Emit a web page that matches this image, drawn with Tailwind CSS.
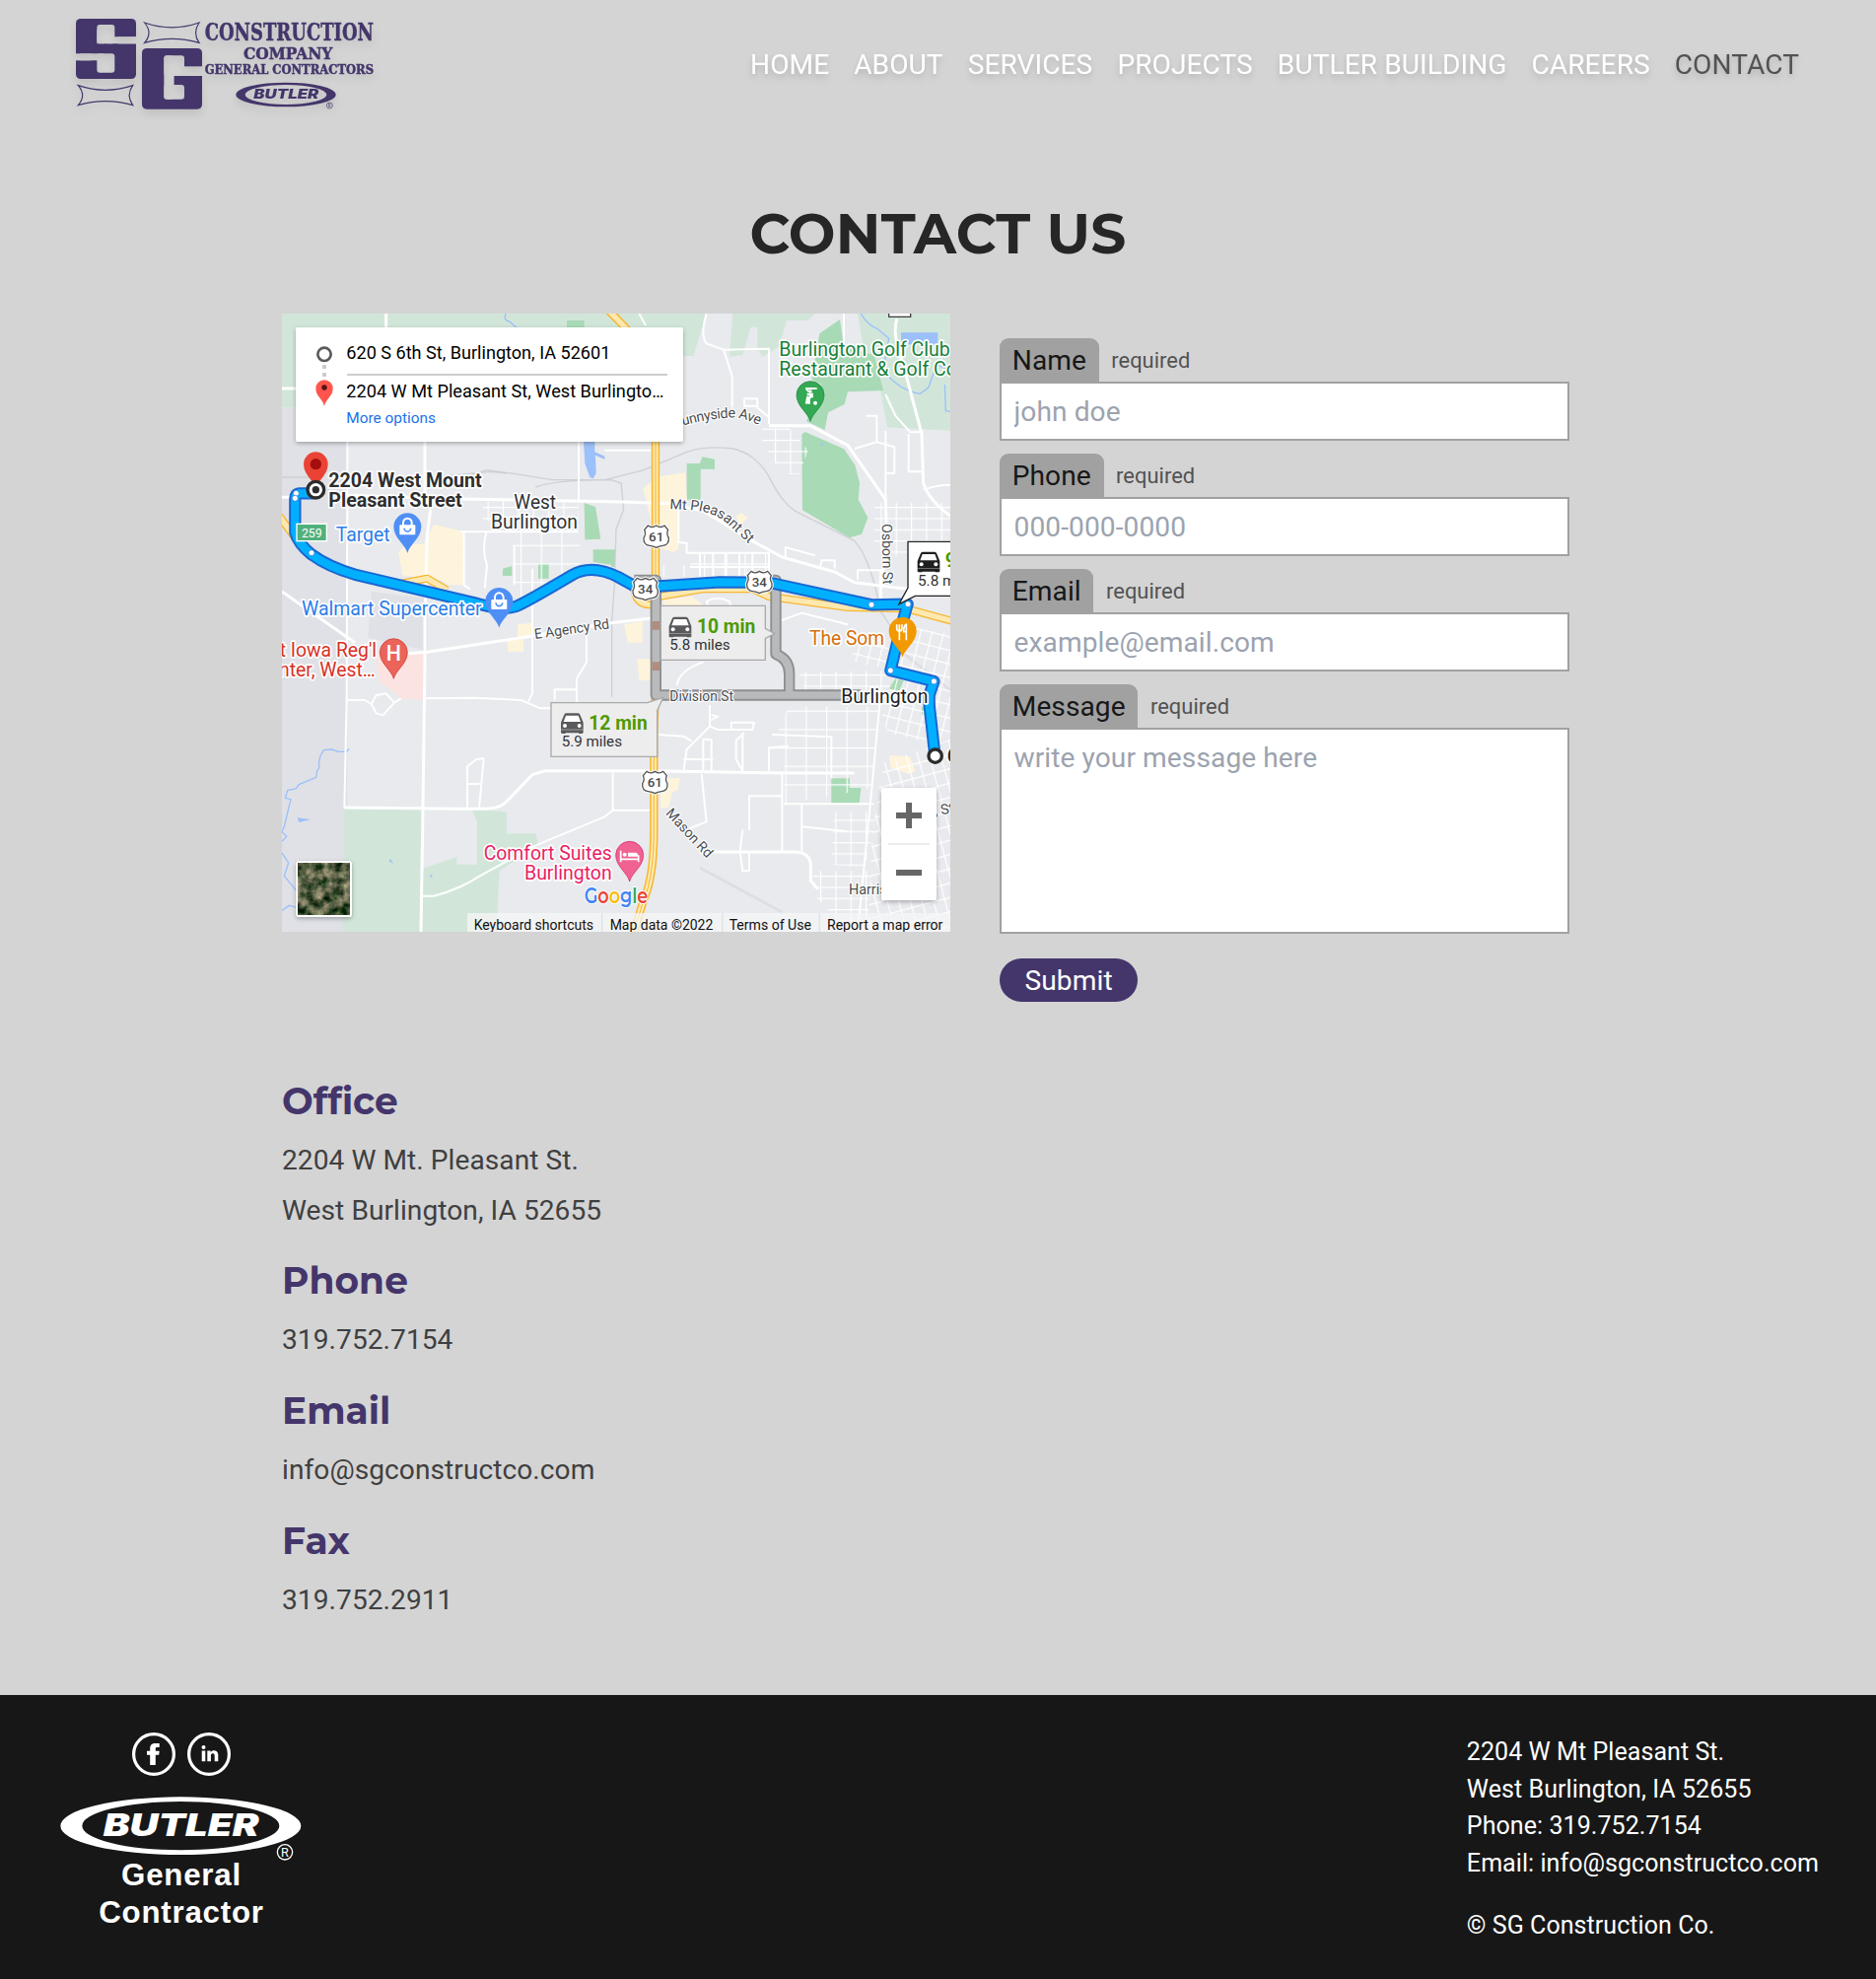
<!DOCTYPE html>
<html lang="en">
<head>
<meta charset="utf-8">
<title>Contact | SG Construction</title>
<script src="https://cdn.jsdelivr.net/npm/@tailwindcss/browser@4"></script>
</head>
<body class="bg-[#d4d4d4] font-['Roboto',sans-serif] text-[28.125px] leading-[43.75px] tracking-[0.002em] text-neutral-700">

<header class="flex h-[130px] items-center justify-between pl-[76px] pr-[78px]">
  <svg class="h-[96px] w-[306px] overflow-visible [filter:drop-shadow(0_5px_4px_rgb(0_0_0/0.09))]" viewBox="48 51 918 288" fill="#44366b">
    <mask id="ms" maskUnits="userSpaceOnUse" x="40" y="40" width="420" height="310">
      <rect x="40" y="40" width="420" height="310" fill="#fff"/>
      <g fill="#000">
        <rect x="115" y="75" width="54" height="58" rx="9"/><rect x="115" y="90" width="24" height="43" rx="2"/><rect x="141" y="112" width="110" height="21" rx="8"/><rect x="180" y="112" width="60" height="21"/>
        <rect x="115" y="163" width="54" height="58" rx="9"/><rect x="60" y="163" width="80" height="21" rx="8"/><rect x="48" y="163" width="50" height="21"/>
        <rect x="319" y="169" width="30" height="133" rx="9"/><rect x="319" y="169" width="62" height="62" rx="9"/><rect x="319" y="258" width="62" height="44" rx="9"/><rect x="330" y="190" width="19" height="90"/><rect x="360" y="202" width="90" height="29"/>
      </g>
    </mask>
    <g mask="url(#ms)">
      <rect x="51" y="57" width="183" height="183" rx="14"/>
      <rect x="252" y="147" width="183" height="185" rx="14"/>
    </g>
    <g fill="none" stroke="#44366b" stroke-width="3.5">
      <path d="M260 69Q343 98 426 69Q405 100 426 130Q343 106 260 130Q286 100 260 69Z"/>
      <path d="M58 260Q141 288 224 260Q203 290 224 320Q141 296 58 320Q84 290 58 260Z"/>
    </g>
    <g font-family="DejaVu Serif" font-weight="bold" letter-spacing="0" stroke="#44366b" stroke-width="1.5">
      <text x="443" y="124" font-size="73" textLength="514" lengthAdjust="spacingAndGlyphs">CONSTRUCTION</text>
      <text x="561" y="180" font-size="48" textLength="271" lengthAdjust="spacingAndGlyphs">COMPANY</text>
      <text x="443" y="224" font-size="37" textLength="514" lengthAdjust="spacingAndGlyphs">GENERAL CONTRACTORS</text>
    </g>
    <path fill-rule="evenodd" d="M538 288a152 37 0 1 0 304 0a152 37 0 1 0 -304 0ZM566 288a124 30 0 1 0 248 0a124 30 0 1 0 -248 0Z"/>
    <text x="592" y="301" font-family="Inter" font-weight="900" font-style="italic" font-size="38" letter-spacing="0" textLength="198" lengthAdjust="spacingAndGlyphs">BUTLER</text>
    <circle cx="823" cy="321" r="9" fill="none" stroke="#44366b" stroke-width="2"/>
    <text x="818" y="326" font-family="Roboto" font-size="14" letter-spacing="0">R</text>
  </svg>
  <nav class="flex gap-[25px] pt-[2px] text-white [filter:drop-shadow(0_5px_3.75px_rgb(0_0_0/0.1))_drop-shadow(0_2.5px_2.5px_rgb(0_0_0/0.08))]">
    <a>HOME</a><a>ABOUT</a><a>SERVICES</a><a>PROJECTS</a><a>BUTLER BUILDING</a><a>CAREERS</a><a class="text-neutral-600">CONTACT</a>
  </nav>
</header>

<main class="h-[1589px]">
  <h1 class="pt-[74px] text-center font-['Montserrat','Inter',sans-serif] text-[56.5px] leading-[65px] font-bold tracking-[0.004em] text-neutral-800">CONTACT US</h1>
  <div class="mx-auto mt-[49px] flex w-[1331px] items-start gap-[25px]">
    <svg class="h-[627px] w-[678px] shrink-0" viewBox="18 24 2034 1881" font-family="Roboto" letter-spacing="0">
      <defs>
        <path id="pin" d="M0 0C-6 -26 -42 -46 -42 -80A42 42 0 1 1 42 -80C42 -46 6 -26 0 0Z"/>
        <pattern id="grid" width="46" height="34" patternUnits="userSpaceOnUse"><path d="M0 0H46M0 0V34" stroke="#fff" stroke-width="7"/></pattern>
        <pattern id="wide" width="62" height="56" patternUnits="userSpaceOnUse"><path d="M0 0H62M0 0V56" stroke="#fff" stroke-width="7"/></pattern>
        <pattern id="tilt" width="34" height="42" patternUnits="userSpaceOnUse" patternTransform="rotate(-15)"><path d="M0 0H34M0 0V42" stroke="#fff" stroke-width="7"/></pattern>
        <pattern id="tilt2" width="34" height="40" patternUnits="userSpaceOnUse" patternTransform="rotate(14)"><path d="M0 0H34M0 0V40" stroke="#fff" stroke-width="7"/></pattern>
        <filter id="soft" x="-10%" y="-10%" width="120%" height="130%"><feDropShadow dx="0" dy="5" stdDeviation="6" flood-opacity=".3"/></filter>
        <filter id="sat" x="0" y="0" width="100%" height="100%" color-interpolation-filters="sRGB"><feTurbulence type="fractalNoise" baseFrequency=".035" numOctaves="4" seed="8"/><feColorMatrix values="1.2 0 0 0 -.28  .9 .1 0 0 -.14  .9 0 0 0 -.2  0 0 0 0 1"/></filter>
        <g id="shield"><path d="M-25 -33Q-14 -24 0 -33Q14 -24 25 -33L36 -20Q30 -8 38 4Q40 26 20 28Q8 29 0 34Q-8 29 -20 28Q-40 26 -38 4Q-30 -8 -36 -20Z" fill="#fff" stroke="#fff" stroke-width="10"/><path d="M-25 -33Q-14 -24 0 -33Q14 -24 25 -33L36 -20Q30 -8 38 4Q40 26 20 28Q8 29 0 34Q-8 29 -20 28Q-40 26 -38 4Q-30 -8 -36 -20Z" fill="#fff" stroke="#555" stroke-width="4"/></g>
        <g id="car"><path d="M-24 -28Q-22 -32 -17 -32H17Q22 -32 24 -28L34 -4V28H-34V-4Z"/><path d="M-32 20H-20V30H-32ZM20 20H32V30H20Z"/><path d="M-19 -25H19L26 -6H-26Z" fill="#fff"/><circle cx="-22" cy="6" r="6" fill="#fff"/><circle cx="22" cy="6" r="6" fill="#fff"/><path d="M-34 18H34" stroke="#fff" stroke-width="2" opacity=".6"/></g>
        <g id="bag"><rect x="-24" y="-80" width="48" height="30" rx="3" fill="#fff"/><path d="M-13 -78V-86A13 14 0 0 1 13 -86V-78" fill="none" stroke="#fff" stroke-width="6"/><path d="M-10 -70A10 10 0 0 0 10 -70" fill="none" stroke="#4f8ff5" stroke-width="5"/></g>
      </defs>
      <rect x="18" y="24" width="2034" height="1881" fill="#e8eaed"/>
      <path d="M18 310H217V1530L205 1905H18ZM290 870L460 890V1050L280 1010Z" fill="#e0e1e6"/>
      <!-- parks and open land -->
      <g fill="#d1e6d9">
        <path d="M18 24H1310L1270 153H60V310H18ZM1390 24H1640L1620 45H1555L1530 125L1480 155L1465 130V65H1445L1420 150L1380 155ZM1770 24H2052V380L1860 370L1840 260L1790 140Z"/>
        <path d="M208 1530H447V1712L550 1678V1700H612V1570L596 1532L702 1540V1606H790L798 1640L680 1720L670 1905H202Z"/>
      </g>
      <g fill="#a8dab5">
        <path d="M1654 85L1716 42L1728 125L1820 150L1848 258L1740 262L1730 300L1680 325L1670 378L1614 352L1660 240L1630 225Z"/>
        <path d="M1600 392L1610 384L1728 436L1762 485L1776 540L1772 590L1801 645L1782 695L1745 706L1602 622Z"/>
        <path d="M1250 480H1290L1297 460L1335 467V497H1292V590H1250ZM938 600L972 612L988 710L940 712ZM965 742H1030V790L965 780ZM798 786H830V830H798ZM690 800L718 792V822H690ZM885 45H938V66H885ZM1020 742H1032V795H1020ZM1690 1438H1746V1467H1780L1775 1514H1690ZM1885 1135L1910 1140L1895 1175L1865 1165ZM1965 1220H1985V1245H1965Z"/>
      </g>
      <g fill="#fef4dc">
        <path d="M480 665L572 688V850H525L500 835L385 820L372 750L400 725H450ZM1117 555L1165 520L1245 508L1250 590L1225 600V740L1210 750L1160 735ZM1400 640L1415 630L1437 645L1410 670ZM1060 970L1115 960V1025H1070ZM1100 1075H1140V1140H1105ZM735 970L780 965V1005H753V1052H705V1010H735ZM1195 1437H1230L1222 1475L1205 1480L1197 1525L1170 1530V1480ZM1867 1368L1930 1372L1945 1415L1925 1425L1870 1405ZM1180 895L1265 885L1305 915H1180Z"/>
      </g>
      <path d="M300 1055L452 1060V1200L400 1195L385 1200L360 1175L315 1145Z" fill="#fbe3e2"/>
      <g fill="#9cc0f9"><path d="M936 413H970V445L1000 458V468L972 455L974 510L965 526L955 522L940 480ZM1902 82H2014V118H1902ZM65 1558L105 1563L70 1572ZM343 1690L348 1684L358 1698ZM466 1730L475 1733V1743ZM1655 420H1668L1660 427Z"/></g>
      <g fill="none" stroke="#9cc0f9" stroke-width="4"><path d="M700 24Q690 45 710 48L735 70M1780 24Q1800 60 1830 70L1865 100L1855 150L1850 200Q1900 260 1960 268L1985 250L2010 180L2052 195M2035 240L2038 320L2052 322"/><path d="M222 1348L215 1357H190L170 1350L145 1352L135 1370L130 1390L132 1405L125 1415L122 1435L70 1457L60 1470L35 1475L28 1498L45 1502L38 1530L25 1585L18 1600L32 1615L18 1630M18 1665L38 1695L25 1735L62 1780M18 1840L40 1825L65 1832"/></g>
      <!-- rail lines -->
      <g fill="none" stroke="#cfd0d4" stroke-width="4"><path d="M18 522H100M480 522L650 505L700 510M560 530L640 500L730 512L840 530L1000 530L1120 500L1250 445Q1310 425 1390 435Q1460 450 1500 520Q1540 600 1580 625L1760 715Q1810 770 1840 930L1870 975M790 552Q850 530 1020 530L1050 540L1058 620L1035 680L1030 850L1022 960V1190"/><path d="M1290 1710L1540 1845M1900 1050L2052 1170" stroke="#dddee2" stroke-width="8"/></g>
      <!-- city blocks -->
      <path fill="url(#wide)" d="M1560 1220H1840L1810 1470L1545 1516V1400L1500 1360ZM720 690H925V830H840L720 900ZM1260 755H1500V825H1170V790H1260Z"/>
      <path fill="url(#grid)" d="M1635 1720H1810L1800 1905H1680V1840L1635 1790ZM1700 1540H1830L1790 1710L1690 1700ZM630 595H920V655H630ZM1820 600H2052V760H1880L1820 740ZM1480 370L1560 372L1620 440L1592 512H1560L1520 480L1480 420ZM1590 1115L1870 1110V1170H1610Z"/>
      <path fill="url(#tilt)" d="M1850 1390L2052 1320V1905H1800L1815 1600Z"/>
      <path fill="url(#tilt2)" d="M1925 975L2052 1000V1310L1990 1330L1860 1300L1840 1230L1890 1110L1740 1080L1780 1020L1900 1010Z"/>
      <g fill="none" stroke="#fff" stroke-width="6" stroke-linejoin="round">
        <path d="M217 413V560L215 1200L208 1526M921 413V600M560 688H920M640 690Q625 740 642 790L635 860M572 690V850L590 862M780 800V1180L768 1205M725 730V850M780 960V1180M945 1000V1085L915 1135V1215M848 1200V1168H915M215 1200H270L290 1212L305 1185L335 1180L360 1208L380 1195M290 1212L305 1240L325 1246L360 1208M453 1195L600 1193L745 1200L805 1225H840M582 1530V1402L610 1380L632 1378L618 1530M580 1455H620M447 1796H480Q560 1775 620 1735L790 1642L1000 1555L1025 1535H1150M1025 1420V1535"/>
        <path d="M1105 24L1125 60M1310 24Q1290 90 1310 115L1362 134L1500 131V360M1362 134L1388 215V310M1000 440H1140M1425 283H1465V310L1500 340M1425 283V305H1465M1728 24V120M1795 335H1828V415L1882 430V510H1855V590M1828 415L1760 435M1855 380V590M1855 270L1885 335L1930 385H1970M1925 390V505H1965M1970 560Q2010 545 2052 545M1225 600V720L1250 722V752H1500V830M1550 765V735L1640 760M1500 795H1260M1290 755V825M1330 755V825M1370 755V825M1410 755V825M1450 755V825M1655 800L1660 775H1700V800M1770 835V805H1840V860M1330 960L1310 900Q1340 880 1380 900L1400 960M1530 960L1600 935L1740 970"/>
        <path d="M1220 1155Q1225 1110 1300 1084M1320 1215V1280L1250 1350L1240 1415M1165 1305L1240 1310L1265 1325M1320 1280L1345 1290H1450L1455 1268H1385V1290M1325 1245L1345 1250L1320 1262M1300 1415V1320H1325V1415M1240 1380H1330M1425 1300L1400 1322V1380L1420 1415V1300M1500 1415V1345L1560 1340M1540 1425V1660M1440 1595V1492H1540M1295 1425L1310 1570L1260 1590M1600 1516V1660M1420 1595L1412 1660L1420 1720H1440V1665M1600 1585L1740 1600M1545 1516H1820M1510 1305L1690 1312V1438M1840 1180L1810 1500L1770 1905"/>
      </g>
      <g fill="none" stroke="#fff" stroke-width="9" stroke-linejoin="round">
        <path d="M335 24V66M18 252H62M18 583H60M160 575L560 588L1060 597L1200 602L1300 625Q1380 670 1420 700L1540 765L1700 810L1760 842L1920 862M453 413V590M470 620L460 700L453 960V1080L447 1530L441 1905M18 870L240 1025M400 1058L460 1054L780 1005L1020 965L1150 950M208 1527L560 1531H630Q680 1530 700 1510L780 1427L820 1415H1130L1560 1422H1760"/>
        <path d="M1890 40Q1875 80 1900 150L1925 240L1965 390L1970 540Q1985 590 2052 640M1500 365H1626L1740 425L1855 590L1860 760L1840 830V930M1310 1662H1580Q1625 1665 1627 1700V1750L1650 1775"/>
      </g>
      <!-- highways -->
      <g fill="none" stroke-linejoin="round">
        <path d="M1010 12L1090 95M1155 400V1160L1150 1300V1600Q1150 1740 1118 1810L1085 1920" stroke="#f8b630" stroke-width="25"/>
        <path d="M1010 12L1090 95M1155 400V1160L1150 1300V1600Q1150 1740 1118 1810L1085 1920" stroke="#fde9b0" stroke-width="16"/>
        <path d="M10 640L60 710M380 845L460 830L520 865M1090 850Q1090 910 1140 910M1165 885L1250 870L1300 862H1450L1500 885L1740 918L1920 922L2060 960" stroke="#f8b630" stroke-width="24"/>
        <path d="M10 640L60 710M380 845L460 830L520 865M1090 850Q1090 910 1140 910M1165 885L1250 870L1300 862H1450L1500 885L1740 918L1920 922L2060 960" stroke="#fde9b0" stroke-width="16"/>
        <path d="M1155 400V830M1150 1365V1600Q1150 1740 1118 1810L1085 1920" stroke="#f8b630" stroke-width="3"/>
      </g>
      <!-- alternative routes -->
      <g fill="none" stroke-linejoin="round">
        <path d="M1090 835H1156V1185H1780M1505 835H1521V1060Q1562 1075 1562 1120V1185" stroke="#8d8e90" stroke-width="34"/>
        <path d="M1090 835H1156V1185H1780M1505 835H1521V1060Q1562 1075 1562 1120V1185" stroke="#b9babb" stroke-width="23"/>
        <path d="M1156 960V986M1156 1084V1110" stroke="#b08d7e" stroke-width="22"/>
      </g>
      <!-- main route -->
      <g fill="none" stroke-linejoin="round" stroke-linecap="round">
        <path d="M112 571H72Q58 571 58 588V690Q68 725 108 757Q160 795 240 818L600 903Q690 930 730 915Q760 903 900 820Q960 785 1040 825L1100 858L1350 841L1500 842L1812 910L1922 908L1900 985L1870 1110L2002 1143L1988 1185V1215L2005 1368" stroke="#1967d2" stroke-width="37"/>
        <path d="M112 571H72Q58 571 58 588V690Q68 725 108 757Q160 795 240 818L600 903Q690 930 730 915Q760 903 900 820Q960 785 1040 825L1100 858L1350 841L1500 842L1812 910L1922 908L1900 985L1870 1110L2002 1143L1988 1185V1215L2005 1368" stroke="#00b0ff" stroke-width="25"/>
      </g>
      <g fill="#fff" stroke="#1967d2" stroke-width="2"><circle cx="61" cy="571" r="9"/><circle cx="58" cy="586" r="9"/><circle cx="108" cy="752" r="9"/><circle cx="1812" cy="910" r="9"/><circle cx="1923" cy="908" r="9"/><circle cx="1870" cy="1110" r="9"/><circle cx="2002" cy="1143" r="9"/></g>
      <circle cx="2006" cy="1370" r="20" stroke="#2b2b2b" stroke-width="10" fill="#fff"/>
      <!-- shields -->
      <rect x="1865" y="20" width="66" height="14" fill="#fff" stroke="#444" stroke-width="4"/>
      <use href="#shield" x="1157" y="702"/><use href="#shield" x="1124" y="862"/><use href="#shield" x="1471" y="841"/><use href="#shield" x="1153" y="1450"/>
      <g font-size="40" font-weight="500" fill="#4a4a4a" text-anchor="middle"><text x="1157" y="717">61</text><text x="1124" y="877">34</text><text x="1471" y="856">34</text><text x="1153" y="1465">61</text></g>
      <rect x="63" y="664" width="91" height="52" fill="#52b07c" stroke="#fff" stroke-width="4"/>
      <text x="78" y="704" font-size="37" fill="#fff" textLength="62">259</text>
      <!-- pins -->
      <path d="M121 556C114 530 84 515 84 482A37 37 0 1 1 158 482C158 515 128 530 121 556Z" fill="#ea4335"/><circle cx="121" cy="482" r="17" fill="#a50e0e"/>
      <circle cx="121" cy="560" r="25" fill="#fff" stroke="#2b2b2b" stroke-width="10"/><circle cx="121" cy="560" r="11" fill="#2b2b2b"/>
      <use href="#pin" x="400" y="753" fill="#4f8ff5"/><use href="#bag" x="400" y="747"/>
      <use href="#pin" x="679" y="980" fill="#4f8ff5"/><use href="#bag" x="679" y="974"/>
      <use href="#pin" x="1626" y="352" fill="#34a853" stroke="#188038" stroke-width="2"/>
      <g stroke="#fff" stroke-width="6" fill="none"><path d="M1611 252H1646M1613 252L1622 262"/><path d="M1616 270L1630 270L1622 284V299M1618 276L1614 299M1630 270L1632 280" stroke-width="7"/></g><circle cx="1626" cy="261" r="5" fill="#fff"/><circle cx="1641" cy="296" r="6" fill="#fff"/>
      <use href="#pin" x="358" y="1135" fill="#ea6459" stroke="#c5352c" stroke-width="2"/>
      <text x="358" y="1081" font-size="64" font-weight="500" fill="#fff" text-anchor="middle">H</text>
      <use href="#pin" x="1907" y="1070" fill="#f29900"/>
      <path d="M1889 970V982Q1889 990 1897 990Q1905 990 1905 982V970M1897 970V1018M1918 1018V970Q1910 972 1910 992H1918" fill="none" stroke="#fff" stroke-width="5"/>
      <use href="#pin" x="1076" y="1752" fill="#f06292" stroke="#d81b60" stroke-width="2"/>
      <path d="M1049 1658V1693M1103 1693V1672M1049 1684H1103" stroke="#fff" stroke-width="5"/><path d="M1071 1664H1094Q1102 1664 1102 1676H1071Z" fill="#fff"/><circle cx="1061" cy="1670" r="6" fill="#fff"/>
      <!-- place names -->
      <g stroke="#fff" stroke-width="10" stroke-linejoin="round" paint-order="stroke">
        <g font-weight="bold" fill="#2e2e2e" font-size="58"><text x="160" y="552" textLength="466" lengthAdjust="spacingAndGlyphs">2204 West Mount</text><text x="160" y="611" textLength="406" lengthAdjust="spacingAndGlyphs">Pleasant Street</text><text x="2042" y="1390">6</text></g>
        <g fill="#2b7de9" font-size="59"><text x="182" y="716" textLength="165" lengthAdjust="spacingAndGlyphs">Target</text><text x="78" y="942" textLength="548" lengthAdjust="spacingAndGlyphs">Walmart Supercenter</text></g>
        <g fill="#303134" font-size="58"><text x="724" y="617" textLength="128" lengthAdjust="spacingAndGlyphs">West</text><text x="654" y="677" textLength="264" lengthAdjust="spacingAndGlyphs">Burlington</text></g>
        <text x="1720" y="1209" fill="#202124" font-size="58" textLength="264" lengthAdjust="spacingAndGlyphs">Burlington</text>
        <g fill="#188038" font-size="58"><text x="1531" y="154" textLength="520" lengthAdjust="spacingAndGlyphs">Burlington Golf Club</text><text x="1531" y="213" textLength="655" lengthAdjust="spacingAndGlyphs">Restaurant &amp; Golf Course</text></g>
        <g fill="#d93025" font-size="58"><text x="306" y="1069" text-anchor="end">t Iowa Reg'l</text><text x="302" y="1128" text-anchor="end">nter, West…</text></g>
        <text x="1623" y="1032" fill="#d56e0c" font-size="58" textLength="228" lengthAdjust="spacingAndGlyphs">The Som</text>
        <g fill="#e91e63" font-size="59"><text x="632" y="1686" textLength="390" lengthAdjust="spacingAndGlyphs">Comfort Suites</text><text x="756" y="1745" textLength="266" lengthAdjust="spacingAndGlyphs">Burlington</text></g>
        <g fill="#4a4d51" font-size="43" stroke-width="7">
          <path id="p1" d="M1215 371Q1330 338 1400 341Q1440 347 1480 368" fill="none" stroke="none"/><text><textPath href="#p1" textLength="262">Sunnyside Ave</textPath></text>
          <path id="p2" d="M1198 618L1270 622Q1340 630 1375 665L1450 735" fill="none" stroke="none"/><text><textPath href="#p2" textLength="275">Mt Pleasant St</textPath></text>
          <text transform="translate(1844 664) rotate(89)" textLength="184" lengthAdjust="spacingAndGlyphs">Osborn St</text>
          <text transform="translate(788 1014) rotate(-8)" textLength="230" lengthAdjust="spacingAndGlyphs">E Agency Rd</text>
          <text x="1198" y="1202" font-size="42" textLength="194" lengthAdjust="spacingAndGlyphs">Division St</text>
          <text transform="translate(1184 1546) rotate(47)" textLength="186" lengthAdjust="spacingAndGlyphs">Mason Rd</text>
          <text x="1743" y="1792">Harris</text>
          <text transform="translate(2006 1552) rotate(-10)">, St</text>
        </g>
      </g>
      <!-- travel time callouts -->
      <g fill="#ededee" stroke="#aaa" stroke-width="4"><path d="M1171 913H1489V982L1517 998L1489 1012V1078H1171Z"/><path d="M837 1208H1130L1178 1192L1160 1232V1372H837Z"/></g>
      <path d="M2060 718H1923V858L1896 908L1945 883H2060" fill="#fff" stroke="#222" stroke-width="4"/>
      <g fill="#5a5a5c"><use href="#car" x="1230" y="979"/><use href="#car" x="901" y="1272"/></g><use href="#car" x="1986" y="781" fill="#1f1f1f"/>
      <g fill="#4f9a00" font-weight="bold" font-size="58"><text x="1281" y="997" textLength="178" lengthAdjust="spacingAndGlyphs">10 min</text><text x="952" y="1289" textLength="178" lengthAdjust="spacingAndGlyphs">12 min</text><text x="2036" y="796">9 min</text></g>
      <g fill="#333" font-size="46"><text x="1198" y="1047" textLength="184" lengthAdjust="spacingAndGlyphs">5.8 miles</text><text x="869" y="1340" textLength="184" lengthAdjust="spacingAndGlyphs">5.9 miles</text><text x="1953" y="851">5.8 miles</text></g>
      <!-- directions card -->
      <rect x="60" y="66" width="1179" height="348" rx="7" fill="#fff" filter="url(#soft)"/>
      <circle cx="147" cy="148" r="20" fill="none" stroke="#5a5a5a" stroke-width="8"/><path d="M141 180h12v12h-12ZM141 204h12v12h-12Z" fill="#ccc"/>
      <path d="M147 306C143 284 121 276 121 252A26 26 0 1 1 173 252C173 276 151 284 147 306Z" fill="#ff554c"/><circle cx="147" cy="249" r="8" fill="#4d1513"/>
      <path d="M216 210H1191" stroke="#ccc" stroke-width="6"/>
      <g font-size="54" fill="#000"><text x="214" y="162" textLength="804" lengthAdjust="spacingAndGlyphs">620 S 6th St, Burlington, IA 52601</text><text x="214" y="279" textLength="966" lengthAdjust="spacingAndGlyphs">2204 W Mt Pleasant St, West Burlingto…</text></g>
      <text x="214" y="357" font-size="45" fill="#1a73e8" textLength="272" lengthAdjust="spacingAndGlyphs">More options</text>
      <!-- satellite toggle -->
      <rect x="61" y="1690" width="170" height="170" rx="8" fill="#fff" filter="url(#soft)"/><rect x="67" y="1696" width="158" height="158" rx="4" fill="#3d4c3a" filter="url(#sat)"/>
      <!-- zoom control -->
      <rect x="1842" y="1467" width="168" height="342" rx="6" fill="#fff" filter="url(#soft)"/>
      <path d="M1887 1551H1965M1926 1512V1590M1887 1725H1965" stroke="#666" stroke-width="18"/><path d="M1863 1638H1989" stroke="#e6e6e6" stroke-width="5"/>
      <!-- attribution -->
      <rect x="582" y="1848" width="1470" height="60" fill="#f5f5f5" opacity=".75"/><path d="M992 1848V1905M1358 1848V1905M1654 1848V1905" stroke="#dfe3e2" stroke-width="4"/>
      <g font-size="43" fill="#111"><text x="602" y="1898" textLength="364" lengthAdjust="spacingAndGlyphs">Keyboard shortcuts</text><text x="1016" y="1898" textLength="314" lengthAdjust="spacingAndGlyphs">Map data ©2022</text><text x="1379" y="1898" textLength="250" lengthAdjust="spacingAndGlyphs">Terms of Use</text><text x="1677" y="1898" textLength="352" lengthAdjust="spacingAndGlyphs">Report a map error</text></g>
      <text x="938" y="1817" font-family="Montserrat, Inter" font-size="64" font-weight="600" stroke="#fff" stroke-width="6" paint-order="stroke" textLength="194" lengthAdjust="spacingAndGlyphs"><tspan fill="#4285f4">G</tspan><tspan fill="#ea4335">o</tspan><tspan fill="#fbbc04">o</tspan><tspan fill="#4285f4">g</tspan><tspan fill="#34a853">l</tspan><tspan fill="#ea4335">e</tspan></text>
    </svg>

    <form class="flex flex-1 flex-col gap-[13px] p-[25px]">
      <div>
        <div class="flex h-[44px] items-start"><label class="h-[44px] rounded-t-[9px] bg-neutral-400 px-[12.8px] leading-[45.5px] text-neutral-900">Name</label><span class="px-[12.5px] text-[21.875px] leading-[46px] text-neutral-600">required</span></div>
        <input class="block h-[60px] w-full border-2 border-neutral-400 bg-white px-[12.5px] tracking-[0.003em] placeholder:text-[#9ca3af]" placeholder="john doe">
      </div>
      <div>
        <div class="flex h-[44px] items-start"><label class="h-[44px] rounded-t-[9px] bg-neutral-400 px-[12.8px] leading-[45.5px] text-neutral-900">Phone</label><span class="px-[12.5px] text-[21.875px] leading-[46px] text-neutral-600">required</span></div>
        <input class="block h-[60px] w-full border-2 border-neutral-400 bg-white px-[12.5px] tracking-[0.003em] placeholder:text-[#9ca3af]" placeholder="000-000-0000">
      </div>
      <div>
        <div class="flex h-[44px] items-start"><label class="h-[44px] rounded-t-[9px] bg-neutral-400 px-[12.8px] leading-[45.5px] text-neutral-900">Email</label><span class="px-[12.5px] text-[21.875px] leading-[46px] text-neutral-600">required</span></div>
        <input class="block h-[60px] w-full border-2 border-neutral-400 bg-white px-[12.5px] tracking-[0.003em] placeholder:text-[#9ca3af]" placeholder="example@email.com">
      </div>
      <div>
        <div class="flex h-[44px] items-start"><label class="h-[44px] rounded-t-[9px] bg-neutral-400 px-[12.8px] leading-[45.5px] text-neutral-900">Message</label><span class="px-[12.5px] text-[21.875px] leading-[46px] text-neutral-600">required</span></div>
        <textarea class="block h-[209px] w-full resize-none border-2 border-neutral-400 bg-white px-[12.5px] py-[7px] tracking-[0.003em] placeholder:text-[#9ca3af]" placeholder="write your message here"></textarea>
      </div>
      <button class="mt-[12px] h-[44px] self-start rounded-full bg-[#44366b] px-[25.5px] pt-px tracking-[0.003em] text-white">Submit</button>
    </form>
  </div>

  <div class="mx-auto mt-[51px] flex w-[1331px] flex-col gap-[21.5px] leading-[50.5px]">
    <section class="mb-[-1px]"><h2 class="mb-[10px] font-['Montserrat','Inter',sans-serif] text-[37.5px] leading-[50px] font-bold tracking-normal text-[#44366b]">Office</h2><p>2204 W Mt. Pleasant St.</p><p>West Burlington, IA 52655</p></section>
    <section><h2 class="mb-[10px] font-['Montserrat','Inter',sans-serif] text-[37.5px] leading-[50px] font-bold tracking-normal text-[#44366b]">Phone</h2><p>319.752.7154</p></section>
    <section><h2 class="mb-[10px] font-['Montserrat','Inter',sans-serif] text-[37.5px] leading-[50px] font-bold tracking-normal text-[#44366b]">Email</h2><p>info@sgconstructco.com</p></section>
    <section><h2 class="mb-[10px] font-['Montserrat','Inter',sans-serif] text-[37.5px] leading-[50px] font-bold tracking-normal text-[#44366b]">Fax</h2><p>319.752.2911</p></section>
  </div>
</main>

<footer class="flex h-[288px] justify-between bg-neutral-900 pr-[58px] pl-[61px] text-[25px] leading-[37.5px] text-white">
  <div class="flex w-[245px] flex-col items-center pt-[38px]">
    <div class="flex gap-[12px]">
      <svg class="size-[44px]" viewBox="0 0 44 44"><circle cx="22" cy="22" r="20.4" fill="none" stroke="#fff" stroke-width="3.2"/><path d="M18.2 33V22.7H15V18.7H18.2V16.2C18.2 12.5 20.2 11 23.5 11H27.7V15H25.4C24.2 15 23.8 15.5 23.8 16.5V18.7H27.7L27.2 22.7H23.8V33Z" fill="#fff"/></svg>
      <svg class="size-[44px]" viewBox="0 0 44 44" fill="#fff"><circle cx="22" cy="22" r="20.4" fill="none" stroke="#fff" stroke-width="3.2"/><circle cx="16.5" cy="15" r="2"/><path d="M14.7 18.5H18.3V29.3H14.7ZM20.3 18.5H23.6V20C25.5 17.2 31.3 17.7 31.3 22.8V29.3H27.7V23.5C27.7 20.5 23.9 20.7 23.9 23.5V29.3H20.3Z"/></svg>
    </div>
    <svg class="mt-[20px] h-[66px] w-[245px] shrink-0" viewBox="64 333 735 198" fill="#fff">
      <path fill-rule="evenodd" d="M65 425a366 88 0 1 0 732 0a366 88 0 1 0 -732 0ZM131 425a300 74 0 1 0 600 0a300 74 0 1 0 -600 0Z"/>
      <text x="195" y="457" font-family="Inter" font-weight="900" font-style="italic" font-size="92" letter-spacing="0" textLength="474" lengthAdjust="spacingAndGlyphs">BUTLER</text>
      <circle cx="748" cy="505" r="23" fill="#171717" stroke="#fff" stroke-width="4"/><text x="748" y="519" font-family="Roboto" font-size="38" letter-spacing="0" text-anchor="middle">R</text>
    </svg>
    <div class="mt-[-4px] pl-px text-center font-['Liberation_Sans',sans-serif] text-[31.25px] font-bold tracking-[0.025em]">General<br>Contractor</div>
  </div>
  <div class="pt-[39px] tracking-[0.0025em]">
    <p>2204 W Mt Pleasant St.</p>
    <p>West Burlington, IA 52655</p>
    <p>Phone: 319.752.7154</p>
    <p>Email: info@sgconstructco.com</p>
    <p class="mt-[26px]">© SG Construction Co.</p>
  </div>
</footer>
</body>
</html>
